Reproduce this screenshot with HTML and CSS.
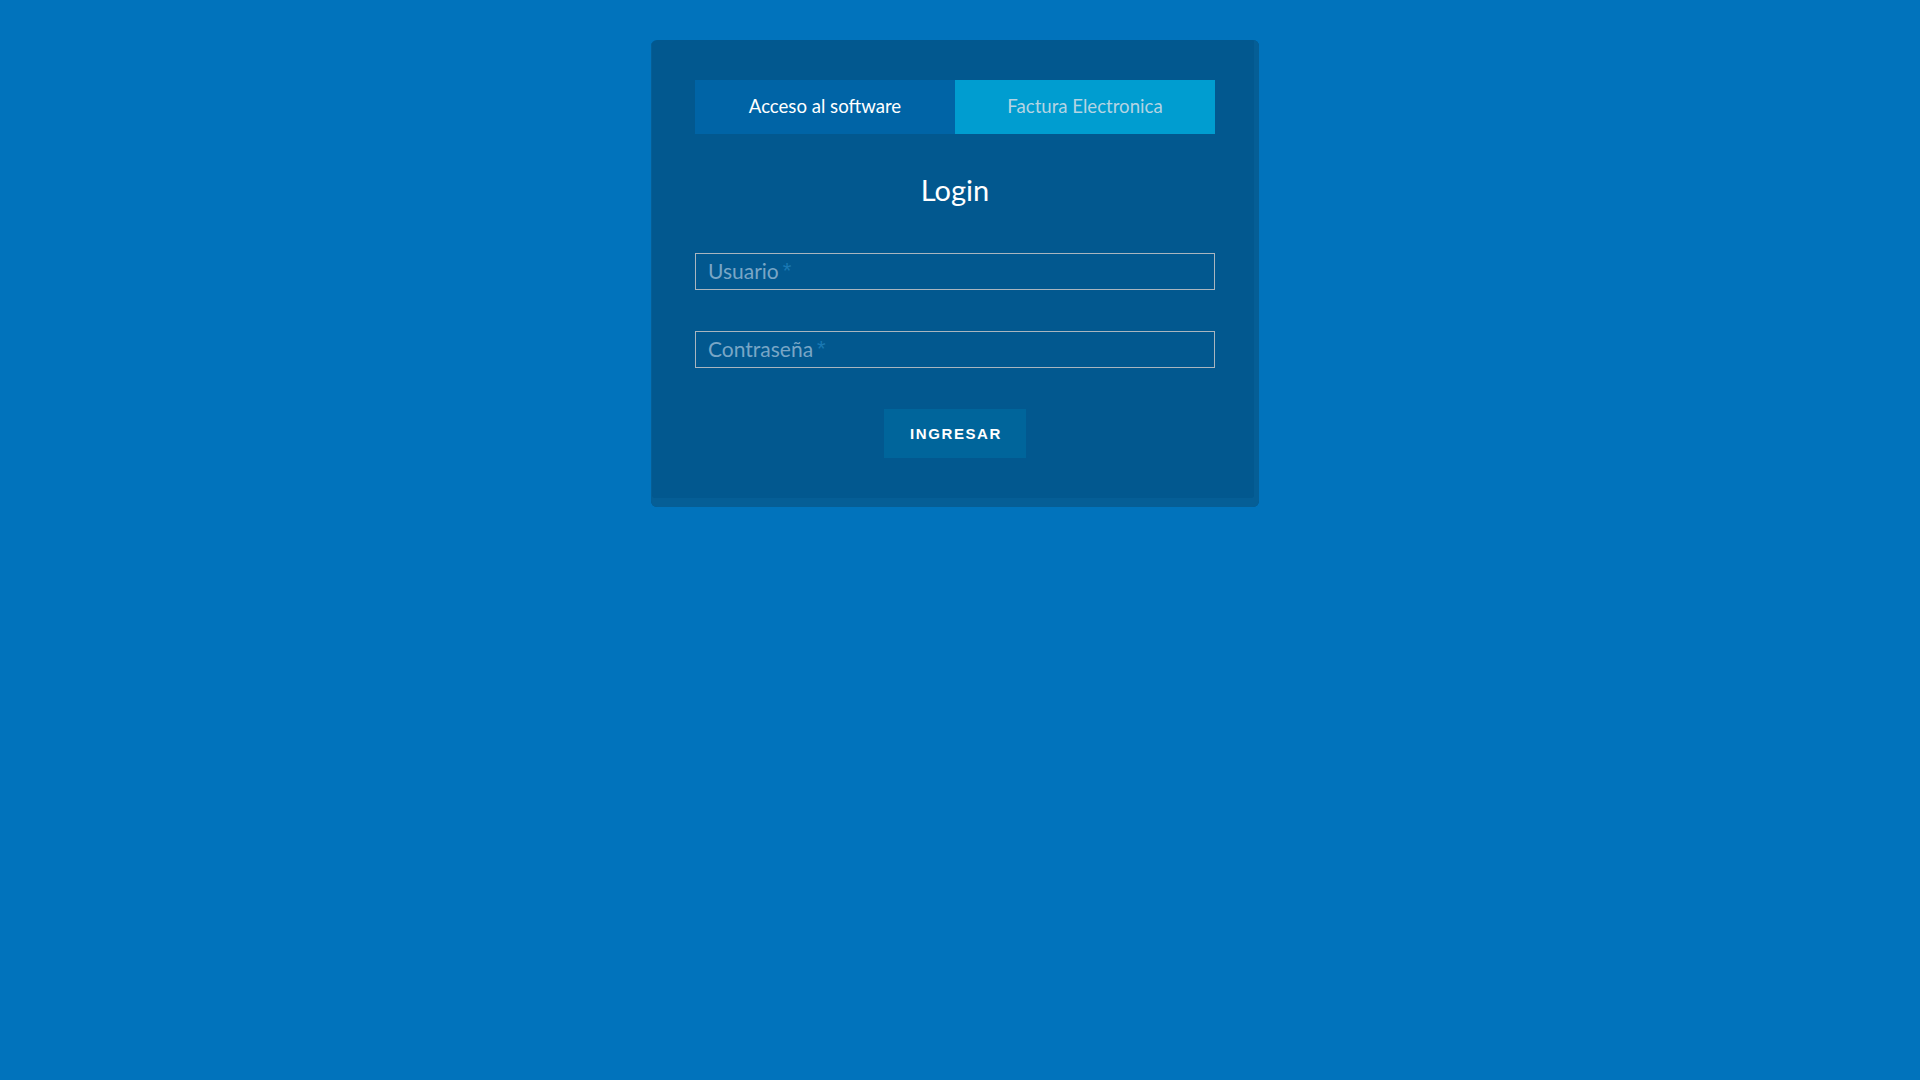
FILE: index.html
```html
<!DOCTYPE html>
<html lang="es">
<head>
<meta charset="utf-8">
<title>Login</title>
<link rel="stylesheet" href="styles.css">
</head>
<body>
<main class="page">
  <section class="card">
    <nav class="tabs">
      <a class="tab tab-active" href="#">Acceso al software</a>
      <a class="tab tab-alt" href="#">Factura Electronica</a>
    </nav>
    <h1 class="title">Login</h1>
    <form class="form">
      <div class="field">
        <input class="input" type="text" aria-label="Usuario">
        <span class="ph">Usuario<span class="req">*</span></span>
      </div>
      <div class="field">
        <input class="input" type="password" aria-label="Contraseña">
        <span class="ph">Contraseña<span class="req">*</span></span>
      </div>
      <div class="actions">
        <button class="btn" type="button">INGRESAR</button>
      </div>
    </form>
  </section>
</main>
</body>
</html>
```
FILE: styles.css
```css
html, body {
  margin: 0;
  padding: 0;
}
body {
  background: #0173bc;
  font-family: "Lato", "Open Sans", sans-serif;
  min-height: 1080px;
}
.page {
  display: flex;
  justify-content: center;
  padding: 40px 10px 0 0;
}
.card {
  width: 608px;
  box-sizing: border-box;
  padding: 40px 44px 49px;
  background: #02588f;
  border-radius: 6px;
  box-shadow: inset -2px -6px 0 3px #055e96;
}
.tabs {
  display: grid;
  grid-template-columns: 1fr 1fr;
  height: 54px;
}
.tab {
  display: flex;
  align-items: center;
  justify-content: center;
  text-decoration: none;
  font-size: 18.6px;
  padding-bottom: 2px;
}
.tab-active {
  background: #0064a6;
  color: #ffffff;
}
.tab-alt {
  background: #009dd0;
  color: #b4d4e3;
}
.title {
  margin: 36px 0 0;
  text-align: center;
  color: #ffffff;
  font-weight: 400;
  font-size: 29px;
  line-height: 40px;
}
.form {
  display: flex;
  flex-direction: column;
  margin-top: 43px;
  gap: 41px;
}
.field {
  position: relative;
  height: 37px;
}
.input {
  display: block;
  width: 100%;
  height: 37px;
  box-sizing: border-box;
  margin: 0;
  border: 1px solid #a9b5bf;
  background: transparent;
  outline: none;
  color: #ffffff;
  font: inherit;
  font-size: 21px;
  padding: 0 13px;
}
.ph {
  position: absolute;
  left: 13px;
  top: 0;
  height: 37px;
  line-height: 36px;
  font-size: 21px;
  color: #79a6c6;
  pointer-events: none;
}
.req {
  color: #1a78b3;
  margin-left: 4px;
  font-family: "Liberation Sans", Arial, sans-serif;
  font-size: 22px;
  position: relative;
  top: -1px;
}
.actions {
  display: flex;
  justify-content: center;
}
.btn {
  width: 142px;
  height: 49px;
  border: none;
  background: #00659b;
  color: #ffffff;
  font-family: "Liberation Sans", Arial, sans-serif;
  font-weight: 700;
  font-size: 15px;
  letter-spacing: 1.6px;
  padding: 0 0 0 2px;
  cursor: pointer;
}
```
